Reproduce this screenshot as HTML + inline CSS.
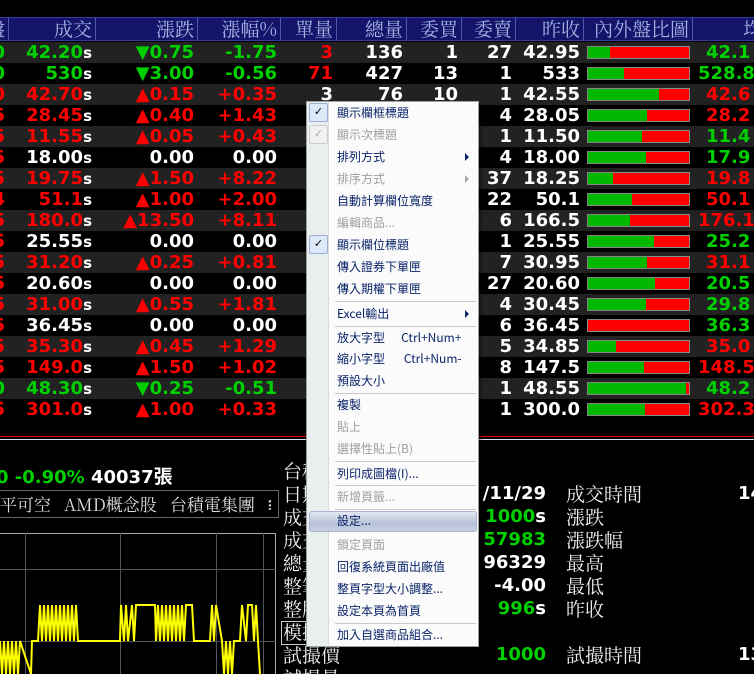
<!DOCTYPE html>
<html style="width:754px;height:674px;overflow:hidden"><head><meta charset="utf-8">
<style>
*{margin:0;padding:0;box-sizing:border-box}
html,body{width:754px;height:674px;overflow:hidden}
body{background:#000;position:relative;font-family:"DejaVu Sans","Liberation Sans","Noto Sans CJK TC",sans-serif}
.hd{position:absolute;top:17px;height:24px;background:#14146a;border-top:1px solid #3a3a9a;border-bottom:1px solid #3a3a9a}
.hc{position:absolute;top:0;height:22px;border-left:1px solid #4a5aa8;color:#a4b2e2;font:19px/22px "Noto Serif CJK SC","Liberation Serif",serif;text-align:right;padding-right:3px;white-space:nowrap;overflow:hidden}
.row{position:absolute;left:0;width:754px;height:21px}
.c{position:absolute;top:0;height:21px;font:bold 18px/22px "DejaVu Sans",sans-serif;text-align:right;white-space:nowrap;padding-right:3px}
.g{color:#00d000}.r{color:#ff0000}.w{color:#fff}
.s{color:#fff;font-size:15px}
.bar{position:absolute;left:587px;top:4px;width:103px;height:13px;border:1px solid #888;background:#f00}
.bar i{display:block;height:100%;background:#00b800}
.lbl{position:absolute;color:#eee;font:19px/22px "Noto Serif CJK SC",serif;white-space:nowrap}
.val{position:absolute;font:bold 18px/22px "DejaVu Sans",sans-serif;text-align:right;white-space:nowrap}
#menu{position:absolute;left:306px;top:101px;width:173px;height:546px;background:#fbfbfb;border:1px solid #a0a0a0;box-shadow:2px 2px 2px rgba(0,0,0,.4)}
#menu .gut{position:absolute;left:0;top:0;width:22px;height:100%;background:#e9eeee;border-right:1px solid #d8dcdc}
.mi{position:absolute;left:30px;font:12px/16px "Noto Sans CJK TC","WenQuanYi Zen Hei",sans-serif;color:#0a246a;white-space:nowrap}
.mi.d{color:#a0a0a0}
.sep{position:absolute;left:28px;right:2px;height:1px;background:#c8c8c8}
.ar{position:absolute;left:158px;width:0;height:0;border-top:4px solid transparent;border-bottom:4px solid transparent;border-left:4px solid #0a246a}
.ck{position:absolute;left:2px;width:19px;height:19px;border:1px solid #9bb0d4;background:#dde8f8;border-radius:2px;font:11px/17px sans-serif;text-align:center;color:#000}
.ck.d{border-color:#ccc;background:#f0f0f0;color:#aaa}
</style></head><body>
<div class="hd" style="left:0;width:754px">
<div class="hc" style="left:-40px;width:48px">盤</div>
<div class="hc" style="left:8px;width:87px">成交</div>
<div class="hc" style="left:95px;width:102px">漲跌</div>
<div class="hc" style="left:197px;width:83px">漲幅%</div>
<div class="hc" style="left:280px;width:56px">單量</div>
<div class="hc" style="left:336px;width:70px">總量</div>
<div class="hc" style="left:406px;width:55px">委買</div>
<div class="hc" style="left:461px;width:54px">委賣</div>
<div class="hc" style="left:515px;width:68px">昨收</div>
<div class="hc" style="left:583px;width:109px">內外盤比圖</div>
<div class="hc" style="left:692px;width:80px;text-align:left;padding-left:50px">均</div>
</div>
<div id="rows"></div>
<div style="position:absolute;left:0;top:436px;width:754px;height:1px;background:#e00"></div>
<div style="position:absolute;left:0;top:439px;width:754px;height:1px;background:#ddd"></div>

<div class="val" style="left:-4px;top:462px;color:#00d000">0 -0.90% <span style="color:#fff">40037</span><span style="color:#fff;font:bold 19px 'Noto Sans CJK TC',sans-serif">張</span></div>
<div style="position:absolute;left:-2px;top:490px;width:281px;height:28px;border:1px solid #666"></div>
<div class="lbl" style="left:0;top:493px;color:#ddd;font-size:17px">平可空 &nbsp; AMD概念股 &nbsp; 台積電集團 &nbsp; ፧</div>
<svg style="position:absolute;left:0;top:533px" width="280" height="141">
<rect x="-1" y="0.5" width="276.5" height="145" fill="none" stroke="#aaa"/>
<g stroke="#555" stroke-width="1">
<line x1="25.5" y1="0" x2="25.5" y2="141"/><line x1="120.5" y1="0" x2="120.5" y2="141"/><line x1="216.5" y1="0" x2="216.5" y2="141"/><line x1="263.5" y1="0" x2="263.5" y2="141"/>
<line x1="0" y1="36.5" x2="276" y2="36.5"/><line x1="0" y1="108.5" x2="276" y2="108.5"/>
</g>
<polyline fill="none" stroke="#ff0" stroke-width="2" points="0,108 2,141 4,108 6,141 8,108 10,141 12,108 14,141 16,108 18,141 20,108 31,141 32,108 38,108 40,72 42,108 44,72 46,108 48,72 50,108 52,72 54,108 56,72 58,108 60,72 62,108 64,72 66,108 68,72 70,108 72,72 74,108 76,72 78,108 120,108 121,72 124,108 126,72 128,108 132,72 134,108 136,72 155,72 156,108 158,72 160,108 162,72 164,108 166,72 168,108 170,72 172,108 174,72 176,108 178,72 180,108 182,72 184,108 186,72 192,72 194,108 210,108 212,72 214,108 216,72 222,108 224,141 226,108 228,141 230,108 232,141 234,108 240,108 242,72 246,108 248,72 252,72 254,108 256,72 258,108 260,141"/>
</svg>

<div id="info"></div>

<div id="menu"><div class="gut"></div></div>

<script>
var R=[
["0g","42.20g","▼0.75g","-1.75g","3r","136","1","27","42.95",22,"42.1g"],
["0g","530g","▼3.00g","-0.56g","71r","427","13","1","533",36,"528.8g"],
["0r","42.70r","▲0.15r","+0.35r","3","76","10","1","42.55",70,"42.6r"],
["5r","28.45r","▲0.40r","+1.43r","","","","4","28.05",58,"28.2r"],
["5r","11.55r","▲0.05r","+0.43r","","","","1","11.50",53,"11.4g"],
["5r","18.00w","0.00w","0.00w","","","","4","18.00",57,"17.9g"],
["5r","19.75r","▲1.50r","+8.22r","","","","37","18.25",25,"19.8r"],
["4r","51.1r","▲1.00r","+2.00r","","","","22","50.1",44,"50.1r"],
["5r","180.0r","▲13.50r","+8.11r","","","","6","166.5",42,"176.1r"],
["5r","25.55w","0.00w","0.00w","","","","1","25.55",65,"25.2g"],
["5r","31.20r","▲0.25r","+0.81r","","","","7","30.95",58,"31.1r"],
["5r","20.60w","0.00w","0.00w","1g","","","27","20.60",66,"20.5g"],
["5r","31.00r","▲0.55r","+1.81r","1r","","","4","30.45",57,"29.8g"],
["5r","36.45w","0.00w","0.00w","","","","6","36.45",0,"36.3g"],
["5r","35.30r","▲0.45r","+1.29r","1r","","","5","34.85",28,"35.0r"],
["5r","149.0r","▲1.50r","+1.02r","","","","8","147.5",55,"148.5r"],
["0g","48.30g","▼0.25g","-0.51g","","","","1","48.55",97,"48.2g"],
["5r","301.0r","▲1.00r","+0.33r","","","","1","300.0",56,"302.3r"]];
var C=[[-40,8],[8,95],[95,197],[197,280],[280,336],[336,406],[406,461],[461,515],[515,583],[583,692],[692,800]];
var h="";
R.forEach(function(r,i){
 h+='<div class="row" style="top:'+(42+21*i)+'px;background:'+(i%2?'#000':'#222')+'">';
 r.forEach(function(v,j){
  if(j==9){h+='<div class="bar"><i style="width:'+v+'%"></i></div>';return;}
  if(v==="")return;
  var col="w",t=v,last=v.slice(-1);
  if(last=="g"||last=="r"||last=="w"){col=last;t=v.slice(0,-1);}
  if(j==1)t+='<span class="s">s</span>';
  var st='left:'+C[j][0]+'px;width:'+(C[j][1]-C[j][0])+'px';
  if(j==10)st='left:692px;width:140px;text-align:left;padding-left:'+(t.length>4?6:14)+'px';
  h+='<div class="c '+col+'" style="'+st+'">'+t+'</div>';
 });
 h+='</div>';});
document.getElementById('rows').innerHTML=h;
var L=["台積","日期","成交","成交","總量","整筆","整股","模擬","試撮價","試撮量"];
var V=[["",""],["/11/29","w"],["1000s","g"],["57983","g"],["96329","w"],["-4.00","w"],["996s","g"],["",""],["1000","g"],["",""]];
var L2=["","成交時間","漲跌","漲跌幅","最高","最低","昨收","","試撮時間",""];
var V2=["","14","","","","","","","13",""];
h="";
for(var i=0;i<10;i++){var y=460+23*i;
 h+='<div class="lbl" style="left:283px;top:'+y+'px">'+L[i]+'</div>';
 if(i==7)h+='<div style="position:absolute;left:281px;top:'+(y)+'px;width:26px;height:24px;border:1px solid #ccc"></div>';
 if(V[i][0]){var t=V[i][0];if(t.slice(-1)=="s")t=t.slice(0,-1)+'<span style="color:#fff">s</span>';
  h+='<div class="val '+V[i][1]+'" style="left:400px;width:146px;top:'+y+'px">'+t+'</div>';}
 if(L2[i])h+='<div class="lbl" style="left:566px;top:'+y+'px">'+L2[i]+'</div>';
 if(V2[i])h+='<div class="val w" style="left:738px;top:'+y+'px">'+V2[i]+'</div>';
}
document.getElementById('info').innerHTML=h;
var M=[[113,"顯示欄框標題","ck"],[135,"顯示次標題","dck"],[157,"排列方式","ar"],[179,"排序方式","dar"],[201,"自動計算欄位寬度"],[223,"編輯商品...","d"],[245,"顯示欄位標題","ck"],[267,"傳入證券下單匣"],[289,"傳入期權下單匣"],[301,"-"],[314,"Excel輸出","ar"],[326,"-"],[338,"放大字型 &nbsp; &nbsp; &nbsp;Ctrl+Num+"],[359,"縮小字型 &nbsp; &nbsp; &nbsp; Ctrl+Num-"],[381,"預設大小"],[393,"-"],[405,"複製"],[427,"貼上","d"],[449,"選擇性貼上(B)","d"],[461,"-"],[474,"列印成圖檔(I)..."],[485,"-"],[497,"新增頁籤...","d"],[509,"-"],[521,"設定...","hl"],[545,"鎖定頁面","d"],[567,"回復系統頁面出廠值"],[589,"整頁字型大小調整..."],[611,"設定本頁為首頁"],[623,"-"],[635,"加入自選商品組合..."]];
h='<div class="gut"></div>';
M.forEach(function(m){var y=m[0]-102,f=m[2]||"";
 if(m[1]=="-"){h+='<div class="sep" style="top:'+y+'px"></div>';return;}
 if(f=="hl")h+='<div style="position:absolute;left:2px;top:'+(y-10)+'px;width:168px;height:21px;border:1px solid #aab4cc;border-radius:3px;background:linear-gradient(#e4e8f2,#b8c2da 60%,#c8d0e2)"></div>';
 if(f=="ck"||f=="dck")h+='<div class="ck'+(f=="dck"?" d":"")+'" style="top:'+(y-10)+'px">✓</div>';
 if(f=="ar"||f=="dar")h+='<div class="ar" style="top:'+(y-4)+'px;'+(f=="dar"?'border-left-color:#aaa':'')+'"></div>';
 h+='<div class="mi'+((f=="d"||f=="dck"||f=="dar")?" d":"")+'" style="top:'+(y-8)+'px">'+m[1]+'</div>';
});
document.getElementById('menu').innerHTML=h;
</script>
</body></html>
